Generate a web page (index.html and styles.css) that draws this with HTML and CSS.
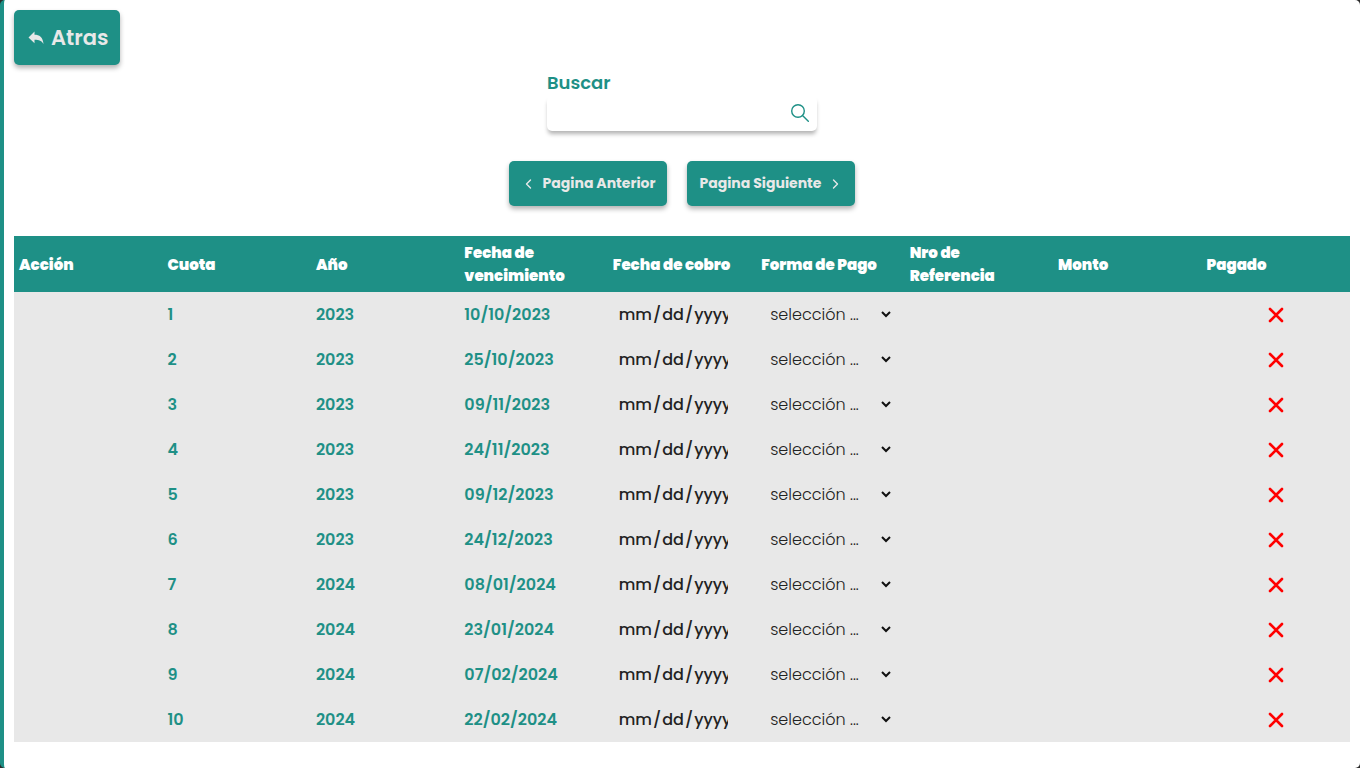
FILE: index.html
```html
<!DOCTYPE html>
<html lang="es">
<head>
    <meta charset="UTF-8">
    <meta name="viewport" content="width=device-width, initial-scale=1.0">
    <title>Cuotas</title>
    <link rel="stylesheet" href="styles.css">
</head>
<body>
    <main class="page">
        <button class="btn btn-back" type="button">
            <svg class="icon-back" viewBox="0 0 16 14" aria-hidden="true">
                <path d="M6.500 0.500v3.200c4.800 0 8.500 2.300 9 9.300-1.700-3-4.300-4.200-9-4.200v3.500L0.500 6.400z" fill="currentColor"/>
            </svg>
            Atras
        </button>

        <div class="search">
            <label class="search-label" for="buscar">Buscar</label>
            <div class="search-box">
                <input class="search-input" id="buscar" type="text">
                <svg class="icon-search" viewBox="0 0 18 18" aria-hidden="true">
                    <circle cx="7" cy="7" r="6.300"/>
                    <path d="M11.500 11.500L17.300 17.300"/>
                </svg>
            </div>
        </div>

        <div class="pagination">
            <button class="btn btn-page" type="button">
                <svg class="icon-arrow" viewBox="0 0 16 16" aria-hidden="true"><path d="M9.500 4L5.500 8l4 4"/></svg>
                Pagina Anterior
            </button>
            <button class="btn btn-page" type="button">
                Pagina Siguiente
                <svg class="icon-arrow" viewBox="0 0 16 16" aria-hidden="true"><path d="M6.500 4l4 4-4 4"/></svg>
            </button>
        </div>

        <table class="table">
            <thead>
                <tr>
                    <th>Acción</th>
                    <th>Cuota</th>
                    <th>Año</th>
                    <th>Fecha de vencimiento</th>
                    <th>Fecha de cobro</th>
                    <th>Forma de Pago</th>
                    <th>Nro de Referencia</th>
                    <th>Monto</th>
                    <th>Pagado</th>
                </tr>
            </thead>
            <tbody id="cuotas"></tbody>
        </table>
    </main>

    <script>
        const cuotas = [
            ['1', '2023', '10/10/2023'],
            ['2', '2023', '25/10/2023'],
            ['3', '2023', '09/11/2023'],
            ['4', '2023', '24/11/2023'],
            ['5', '2023', '09/12/2023'],
            ['6', '2023', '24/12/2023'],
            ['7', '2024', '08/01/2024'],
            ['8', '2024', '23/01/2024'],
            ['9', '2024', '07/02/2024'],
            ['10', '2024', '22/02/2024']
        ];

        document.querySelector('#cuotas').innerHTML = cuotas.map(([cuota, year, vencimiento]) => `
            <tr>
                <td></td>
                <td>${cuota}</td>
                <td>${year}</td>
                <td>${vencimiento}</td>
                <td><input class="date" type="date" aria-label="Fecha de cobro, cuota ${cuota}"></td>
                <td>
                    <div class="select-wrap">
                        <select class="select" aria-label="Forma de pago, cuota ${cuota}">
                            <option>selección ...</option>
                        </select>
                        <svg class="icon-chevron" viewBox="0 0 10 7" aria-hidden="true"><path d="M1 1l4 4 4-4"/></svg>
                    </div>
                </td>
                <td></td>
                <td></td>
                <td class="paid"><svg class="icon-cross" viewBox="0 0 16 16" role="img" aria-label="No pagado"><path d="M2 2l12 12M14 2L2 14"/></svg></td>
            </tr>`).join('');
    </script>
</body>
</html>
```
FILE: styles.css
```css
* {
    margin: 0;
    padding: 0;
    box-sizing: border-box;
}

html {
    background-color: #2b2b2b;
}

body {
    font-family: Poppins, Inter, sans-serif;
    color: #1e9086;
}

button,
input,
select {
    font-family: inherit;
}

.page {
    min-height: 100vh;
    padding: 10px;
    border-left: 4px solid #1e9086;
    border-radius: 5px;
    background-color: #fff;
}

.btn {
    display: flex;
    align-items: center;
    justify-content: center;
    border: none;
    border-radius: 5px;
    background-color: #1e9086;
    color: #e8e8e8;
    font-weight: 700;
    box-shadow: 0 3px 5px rgba(0, 0, 0, 0.3);
    cursor: pointer;
}

.btn-back {
    gap: 7px;
    height: 55px;
    padding: 0 12px 0 14px;
    font-size: 21px;
    font-weight: 600;
}

.icon-back {
    width: 16px;
    height: 14px;
}

.search {
    width: 270px;
    margin: 4px auto 0;
}

.search-label {
    display: block;
    font-size: 18px;
    line-height: 27px;
    font-weight: 600;
}

.search-box {
    display: flex;
    align-items: center;
    height: 35px;
    padding: 0 8px 2px 0;
    border-radius: 5px;
    box-shadow: 0 4px 4px -1px rgba(0, 0, 0, 0.3);
}

.search-input {
    flex: 1;
    min-width: 0;
    height: 100%;
    padding: 0 10px;
    border: none;
    outline: none;
    background: transparent;
    font-size: 16px;
}

.icon-search {
    width: 18px;
    height: 18px;
    fill: none;
    stroke: #1e9086;
    stroke-width: 1.4;
    stroke-linecap: round;
}

.pagination {
    display: flex;
    justify-content: center;
    gap: 20px;
    margin: 30px 0;
}

.btn-page {
    gap: 6px;
    height: 45px;
    padding: 0 12px;
    font-size: 14px;
}

.icon-arrow {
    width: 16px;
    height: 16px;
    fill: none;
    stroke: currentColor;
    stroke-width: 1.4;
    stroke-linecap: round;
    stroke-linejoin: round;
}

.table {
    width: 100%;
    table-layout: fixed;
    border-collapse: collapse;
    background-color: #e8e8e8;
}

.table th {
    height: 56px;
    padding: 0 15px 0 5px;
    background-color: #1e9086;
    color: #fff;
    font-size: 15px;
    line-height: 23px;
    font-weight: 900;
    text-align: left;
}

.table td {
    height: 45px;
    padding: 0 5px;
    font-size: 16px;
    font-weight: 600;
}

.date {
    display: block;
    width: 115px;
    height: 35px;
    padding-left: 5px;
    border: none;
    background: transparent;
    color: #222;
    font-size: 16px;
    font-weight: 500;
}

.date::-webkit-calendar-picker-indicator {
    display: none;
}

.select-wrap {
    display: grid;
    align-items: center;
    padding: 0 9px;
}

.select {
    grid-area: 1 / 1;
    width: 100%;
    height: 35px;
    border: none;
    appearance: none;
    background: transparent;
    color: #222;
    font-size: 16px;
    font-weight: 300;
}

.icon-chevron {
    grid-area: 1 / 1;
    justify-self: end;
    width: 10px;
    height: 7px;
    fill: none;
    stroke: #111;
    stroke-width: 2;
    pointer-events: none;
}

.icon-cross {
    display: block;
    width: 16px;
    height: 16px;
    margin: 0 auto;
    fill: none;
    stroke: #f00;
    stroke-width: 2.6;
    stroke-linecap: round;
}
```
